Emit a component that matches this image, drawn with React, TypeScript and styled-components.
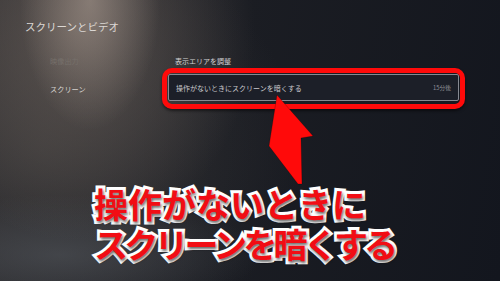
import React from "react";
import styled, { createGlobalStyle } from "styled-components";

const Global = createGlobalStyle`
  html, body { margin: 0; padding: 0; background: #15181f; }
  body { font-family: "Noto Sans CJK JP", "Noto Sans", sans-serif; }
`;

const Screen = styled.div`
  position: relative;
  width: 500px;
  height: 281px;
  overflow: hidden;
  background:
    radial-gradient(ellipse 70px 130px at 90px 0px, rgba(170,155,145,0.6), rgba(170,155,145,0) 100%),
    radial-gradient(ellipse 180px 210px at 75px 30px, rgba(120,108,100,0.6), rgba(120,108,100,0) 100%),
    radial-gradient(ellipse 200px 60px at 60px 255px, rgba(85,89,95,0.55), rgba(85,89,95,0) 100%),
    radial-gradient(ellipse 260px 220px at 40px 150px, rgba(62,60,60,0.7), rgba(62,60,60,0) 100%),
    linear-gradient(100deg, #27272b 0%, #1b1d23 45%, #13161e 100%);
  font-family: "Noto Sans CJK JP", "Noto Sans", sans-serif;
`;

const Header = styled.h1`
  margin: 0;
  padding: 19px 0 0 25px;
  height: 35px;
  box-sizing: border-box;
  font-size: 10.5px;
  line-height: 16px;
  font-weight: 400;
  color: #dcd8d4;
`;

const Body = styled.div`
  display: grid;
  grid-template-columns: 112px 303px;
  grid-template-rows: 14px 41px;
  margin-top: 19px;
  padding-left: 50px;
`;

const MenuItem = styled.div<{ $dim?: boolean }>`
  display: flex;
  align-items: center;
  font-size: 7.2px;
  color: ${(p) => (p.$dim ? "#76706b" : "#d6d2ce")};
`;

const Label = styled.div`
  display: flex;
  align-items: center;
  padding-left: 13px;
  font-size: 7px;
  color: #d2d2d4;
`;

const Highlight = styled.div`
  box-sizing: border-box;
  border: 5px solid #ff0a0a;
  border-radius: 10px;
  padding: 1px 1px 3px 1px;
  box-shadow: 0 2px 3px rgba(0,0,0,0.5);
`;

const Card = styled.div`
  box-sizing: border-box;
  height: 27px;
  display: flex;
  align-items: center;
  justify-content: space-between;
  padding: 0 7px 0 7px;
  background: #1c1f28;
  border: 1px solid #868991;
  border-radius: 2px;
`;

const CardText = styled.span`
  font-size: 7px;
  color: #c9c9cd;
`;

const CardValue = styled.span`
  font-size: 5.8px;
  color: #8c8d93;
`;

const Arrow = styled.svg`
  position: absolute;
  left: 0;
  top: 0;
  width: 500px;
  height: 281px;
  pointer-events: none;
`;

const Caption = styled.div`
  position: absolute;
  left: 94px;
  top: 184px;
  display: flex;
  flex-direction: column;
`;

const CaptionLine = styled.span<{ $spacing: number }>`
  font-size: 34px;
  line-height: 40px;
  font-weight: 700;
  color: #f10d14;
  letter-spacing: ${(p) => p.$spacing}px;
  white-space: nowrap;
  -webkit-text-stroke: 6px #ffffff;
  paint-order: stroke fill;
  text-shadow: 1px 2px 3px rgba(0,0,0,0.6);
`;

export default function App() {
  return (
    <Screen>
      <Global />
      <Header>スクリーンとビデオ</Header>
      <Body>
        <MenuItem $dim>映像出力</MenuItem>
        <Label>表示エリアを調整</Label>
        <MenuItem>スクリーン</MenuItem>
        <Highlight>
          <Card>
            <CardText>操作がないときにスクリーンを暗くする</CardText>
            <CardValue>15分後</CardValue>
          </Card>
        </Highlight>
      </Body>
      <Arrow viewBox="0 0 500 281">
        <polygon
          points="277,95 313,136 301,138 302,184 298,184 269,146"
          fill="#ff0a0a"
          stroke="rgba(0,0,0,0.35)"
          strokeWidth="0.6"
        />
      </Arrow>
      <Caption>
        <CaptionLine $spacing={0}>操作がないときに</CaptionLine>
        <CaptionLine $spacing={-3.8}>スクリーンを暗くする</CaptionLine>
      </Caption>
    </Screen>
  );
}
